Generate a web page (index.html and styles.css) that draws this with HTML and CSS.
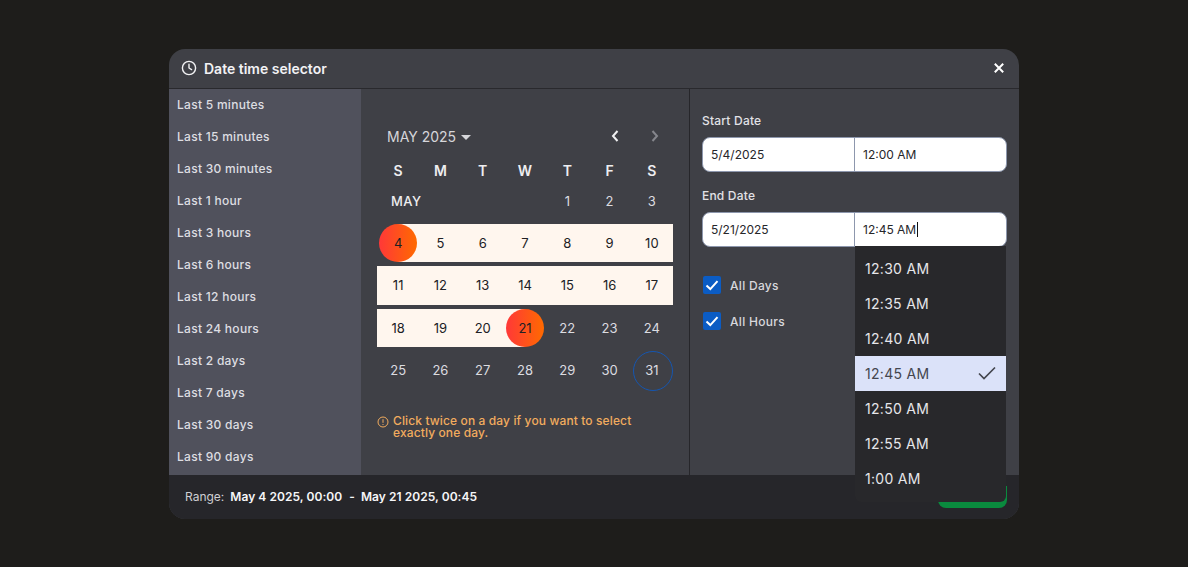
FILE: index.html
```html
<!DOCTYPE html>
<html lang="en">
<head>
<meta charset="utf-8">
<title>Date time selector</title>
<link rel="stylesheet" href="styles.css">
</head>
<body>
<div class="modal">
  <header class="head">
    <svg class="clock" viewBox="0 0 16 16" width="16" height="16" fill="none" stroke="currentColor" stroke-width="1.4" stroke-linecap="round" stroke-linejoin="round"><circle cx="8" cy="8" r="6.6"/><path d="M8 4.2V8l2.6 1.6"/></svg>
    <h1 class="title">Date time selector</h1>
    <svg class="close" viewBox="0 0 10 10" width="10" height="10" fill="none" stroke="currentColor" stroke-width="2"><path d="M.8.8l8.4 8.4M9.2.8L.8 9.2"/></svg>
  </header>
  <div class="body">
    <nav class="side">
      <div class="side-item">Last 5 minutes</div>
      <div class="side-item">Last 15 minutes</div>
      <div class="side-item">Last 30 minutes</div>
      <div class="side-item">Last 1 hour</div>
      <div class="side-item">Last 3 hours</div>
      <div class="side-item">Last 6 hours</div>
      <div class="side-item">Last 12 hours</div>
      <div class="side-item">Last 24 hours</div>
      <div class="side-item">Last 2 days</div>
      <div class="side-item">Last 7 days</div>
      <div class="side-item">Last 30 days</div>
      <div class="side-item">Last 90 days</div>
    </nav>
    <section class="cal">
      <div class="cal-head">
        <span class="month">MAY 2025</span>
        <span class="caret"></span>
        <svg class="chev chev-prev" viewBox="0 0 10 14" width="10" height="14" fill="none" stroke="currentColor" stroke-width="2"><path d="M7.5 2L3 7l4.5 5"/></svg>
        <svg class="chev chev-next" viewBox="0 0 10 14" width="10" height="14" fill="none" stroke="currentColor" stroke-width="2"><path d="M2.5 2L7 7l-4.5 5"/></svg>
      </div>
      <div class="week">
        <span>S</span><span>M</span><span>T</span><span>W</span><span>T</span><span>F</span><span>S</span>
      </div>
      <div class="grid">
        <div class="d d-label">MAY</div>
        <div class="d">1</div><div class="d">2</div><div class="d">3</div>
        <div class="d start"><span class="n">4</span></div>
        <div class="d in"><span class="n">5</span></div><div class="d in"><span class="n">6</span></div><div class="d in"><span class="n">7</span></div><div class="d in"><span class="n">8</span></div><div class="d in"><span class="n">9</span></div><div class="d in"><span class="n">10</span></div>
        <div class="d in"><span class="n">11</span></div><div class="d in"><span class="n">12</span></div><div class="d in"><span class="n">13</span></div><div class="d in"><span class="n">14</span></div><div class="d in"><span class="n">15</span></div><div class="d in"><span class="n">16</span></div><div class="d in"><span class="n">17</span></div>
        <div class="d in"><span class="n">18</span></div><div class="d in"><span class="n">19</span></div><div class="d in"><span class="n">20</span></div>
        <div class="d end"><span class="n">21</span></div>
        <div class="d">22</div><div class="d">23</div><div class="d">24</div>
        <div class="d">25</div><div class="d">26</div><div class="d">27</div><div class="d">28</div><div class="d">29</div><div class="d">30</div>
        <div class="d today"><span class="n">31</span></div>
      </div>
      <div class="hint">
        <svg class="hint-icon" viewBox="0 0 12 12" width="12" height="12" fill="none" stroke="currentColor" stroke-width="1"><circle cx="6" cy="6" r="5"/><path d="M6 3.2v3.6M6 8v1"/></svg>
        <span>Click twice on a day if you want to select<br>exactly one day.</span>
      </div>
    </section>
    <section class="form">
      <label class="lbl">Start Date</label>
      <div class="field">
        <div class="part">5/4/2025</div>
        <div class="part part-time">12:00 AM</div>
      </div>
      <label class="lbl lbl-2">End Date</label>
      <div class="field">
        <div class="part">5/21/2025</div>
        <div class="part part-time"><span>12:45 AM</span><i class="cursor"></i>
          <ul class="menu">
            <li>12:30 AM</li>
            <li>12:35 AM</li>
            <li>12:40 AM</li>
            <li class="sel">12:45 AM
              <svg viewBox="0 0 18 14" width="18" height="14" fill="none" stroke="currentColor" stroke-width="1.7"><path d="M1 7.5l5 5L17 1.5"/></svg>
            </li>
            <li>12:50 AM</li>
            <li>12:55 AM</li>
            <li>1:00 AM</li>
          </ul>
        </div>
      </div>
      <div class="check check-1">
        <span class="box"><svg viewBox="0 0 18 18" width="18" height="18" fill="none" stroke="#fff" stroke-width="2"><path d="M3.5 9.5l3.8 3.6 7.2-8"/></svg></span>All Days
      </div>
      <div class="check">
        <span class="box"><svg viewBox="0 0 18 18" width="18" height="18" fill="none" stroke="#fff" stroke-width="2"><path d="M3.5 9.5l3.8 3.6 7.2-8"/></svg></span>All Hours
      </div>
    </section>
  </div>
  <footer class="foot">
    <span class="range-l">Range:</span>
    <span class="range-v">May 4 2025, 00:00</span>
    <span class="range-v range-dash">-</span>
    <span class="range-v">May 21 2025, 00:45</span>
    <button class="apply">Apply</button>
  </footer>
</div>
</body>
</html>
```
FILE: styles.css
```css
* { box-sizing: border-box; }
html, body { margin: 0; height: 100%; }
body {
  background: #1e1d1b;
  font-family: Inter, "Liberation Sans", sans-serif;
  padding: 49px 169px 0;
}
.modal {
  width: 850px;
  height: 470px;
  border-radius: 16px;
  background: #3f4046;
  display: flex;
  flex-direction: column;
}
.head {
  height: 40px;
  flex: none;
  display: flex;
  align-items: center;
  padding: 0 15px 1px 12px;
  border-bottom: 1px solid #29292d;
  color: #f2f2f4;
}
.clock { flex: none; }
.title { margin: 0 0 0 7px; font-size: 14px; font-weight: 600; flex: 1; }
.close { color: #fff; }
.body { flex: 1; display: flex; min-height: 0; }
.side { width: 192px; flex: none; background: #50515c; }
.side-item {
  height: 32px;
  display: flex;
  align-items: center;
  padding: 0 0 2px 8px;
  font-size: 12px;
  font-weight: 500;
  letter-spacing: .28px;
  color: #dedee2;
}
.cal {
  width: 329px;
  flex: none;
  padding: 31px 16px 0;
  border-right: 1px solid #26262a;
}
.cal-head { height: 32px; display: flex; align-items: center; padding-left: 10px; color: #d6d6da; }
.month { font-size: 14px; }
.caret {
  width: 0; height: 0;
  margin-left: 5px;
  margin-top: 2px;
  border: 5px solid transparent;
  border-top-color: #d6d6da;
  border-bottom-width: 0;
}
.chev { flex: none; }
.chev-prev { margin-left: auto; color: #f0f0f2; }
.chev-next { margin-left: 30px; margin-right: 13px; color: #85868c; }
.week {
  display: grid;
  grid-template-columns: repeat(7, 1fr);
  padding-top: 10px;
  height: 28px;
  font-size: 14px;
  line-height: 18px;
  font-weight: 600;
  text-align: center;
  color: #eeeef0;
}
.grid { display: grid; grid-template-columns: repeat(7, 1fr); grid-auto-rows: 42.28px; margin-top: -.28px; }
.d {
  position: relative;
  display: flex;
  align-items: center;
  justify-content: center;
  font-size: 13px;
  color: #dcdce0;
}
.d-label {
  grid-column: span 4;
  justify-content: flex-start;
  padding-left: 14px;
  font-size: 13px;
  letter-spacing: .4px;
  font-weight: 500;
  color: #eeeef0;
}
.n { position: relative; z-index: 1; }
.in { color: #202024; }
.in::before, .start::before, .end::before {
  content: "";
  position: absolute;
  top: 2px; bottom: 2px; left: 0; right: 0;
  background: #fff6ee;
}
.start::before { left: 50%; }
.end::before { right: 50%; }
.start::after, .end::after, .today::after {
  content: "";
  position: absolute;
  top: 2px;
  left: 50%;
  width: 38px;
  height: 38px;
  margin-left: -19px;
  border-radius: 50%;
}
.start::after, .end::after { background: linear-gradient(90deg, #ff3838, #ff6a00); }
.start, .end { color: #202024; }
.today::after { border: 1px solid #1556b0; }
.hint {
  margin-top: 24px;
  display: flex;
  gap: 4px;
  font-size: 12px;
  line-height: 12px;
  font-weight: 500;
  letter-spacing: .12px;
  color: #f2ac5e;
}
.hint-icon { flex: none; margin-top: 1px; }
.form { flex: 1; padding: 24px 12px 0; min-width: 0; }
.lbl { display: block; font-size: 12px; font-weight: 500; line-height: 16px; letter-spacing: .2px; color: #e2e2e6; }
.lbl-2 { margin-top: 16px; }
.field {
  margin-top: 8px;
  height: 35px;
  display: flex;
  background: #fff;
  border: 1px solid #8d97ad;
  border-radius: 8px;
  font-size: 12px;
  color: #26262a;
}
.part { flex: 0 0 151px; padding-left: 8px; display: flex; align-items: center; position: relative; }
.part-time { flex: 1; border-left: 1px solid #8d97ad; }
.cursor { width: 1px; height: 15px; background: #111; margin-left: 1px; }
.menu {
  position: absolute;
  top: 100%;
  left: 0;
  width: 151px;
  margin: 0;
  padding: 5px 0 6px;
  list-style: none;
  background: #28282b;
  border-radius: 0 0 6px 6px;
  z-index: 5;
}
.menu li {
  height: 35px;
  display: flex;
  align-items: center;
  justify-content: space-between;
  padding: 0 10px 1px;
  font-size: 14px;
  letter-spacing: .3px;
  color: #e6e6ea;
}
.menu .sel { background: #dbe2f9; color: #44464f; }
.check {
  margin: 18px 0 0 1px;
  height: 18px;
  display: flex;
  align-items: center;
  font-size: 12px;
  font-weight: 500;
  letter-spacing: .3px;
  color: #d8d8dc;
}
.check-1 { margin-top: 29px; }
.box {
  width: 18px; height: 18px;
  margin-right: 9px;
  background: #0b5cc4;
  border-radius: 2px;
  flex: none;
  display: flex;
}
.foot {
  height: 44px;
  flex: none;
  display: flex;
  align-items: center;
  padding: 0 12px 2px 16px;
  background: #26262a;
  border-radius: 0 0 16px 16px;
  font-size: 12px;
}
.range-l { color: #cfcfd3; margin-right: 6px; }
.range-v { color: #f6f6f8; font-weight: 600; letter-spacing: .05px; }
.range-dash { margin: 0 6px 0 7px; }
.apply {
  margin: 0 0 9px auto;
  align-self: flex-end;
  width: 69px;
  height: 22px;
  border: 0;
  border-radius: 0 0 8px 8px;
  padding: 0 0 6px;
  background: #0a8a3e;
  color: #fff;
  font: 600 12px Inter, sans-serif;
}
```
